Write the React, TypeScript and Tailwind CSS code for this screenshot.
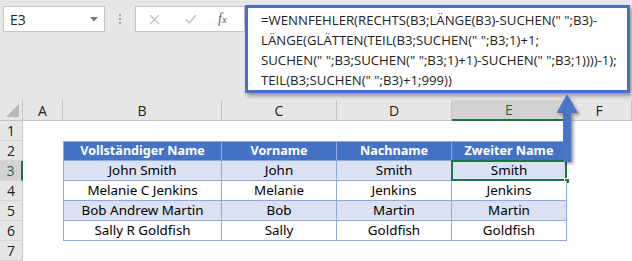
import React from 'react';

const COLS = ['A', 'B', 'C', 'D', 'E', 'F'];

const FORMULA = [
  '=WENNFEHLER(RECHTS(B3;LÄNGE(B3)-SUCHEN(" ";B3)-',
  'LÄNGE(GLÄTTEN(TEIL(B3;SUCHEN(" ";B3;1)+1;',
  'SUCHEN(" ";B3;SUCHEN(" ";B3;1)+1)-SUCHEN(" ";B3;1))))-1);',
  'TEIL(B3;SUCHEN(" ";B3)+1;999))',
];

const TABLE = [
  ['Vollständiger Name', 'Vorname', 'Nachname', 'Zweiter Name'],
  ['John Smith', 'John', 'Smith', 'Smith'],
  ['Melanie C Jenkins', 'Melanie', 'Jenkins', 'Jenkins'],
  ['Bob Andrew Martin', 'Bob', 'Martin', 'Martin'],
  ['Sally R Goldfish', 'Sally', 'Goldfish', 'Goldfish'],
];

function TopBar() {
  return (
    <div className="h-[100px] bg-[#e6e6e6] flex items-start pt-[6px] pl-[3px] shrink-0">
      {/* Name box */}
      <div className="w-[102px] h-[26px] bg-white border border-[#c6c6c6] flex items-center justify-between pl-[6px] pr-[6px]">
        <span className="text-[14px] text-[#222] font-['Open_Sans',sans-serif]">E3</span>
        <svg width="8" height="5" viewBox="0 0 8 5">
          <path d="M0 0 L8 0 L4 4.5 Z" fill="#7a7a7a" />
        </svg>
      </div>
      {/* separator dots */}
      <div className="w-[30px] h-[26px] flex flex-col items-center justify-center gap-[2px]">
        <span className="w-[2px] h-[2px] bg-[#a6a6a6]" />
        <span className="w-[2px] h-[2px] bg-[#a6a6a6]" />
        <span className="w-[2px] h-[2px] bg-[#a6a6a6]" />
      </div>
      {/* cancel / enter / fx */}
      <div className="w-[110px] h-[26px] bg-white border border-[#c6c6c6] flex items-center pl-[13px]">
        <svg width="11" height="11" viewBox="0 0 11 11">
          <path d="M1 1 L10 10 M10 1 L1 10" stroke="#c3c3c3" strokeWidth="1.3" fill="none" />
        </svg>
        <svg width="12" height="10" viewBox="0 0 12 10" className="ml-[25px]">
          <path d="M1 5.5 L4.5 9 L11 1" stroke="#c3c3c3" strokeWidth="1.6" fill="none" />
        </svg>
        <span className="ml-[21px] text-[14px] italic text-[#5f5f5f] font-['Liberation_Serif',serif] leading-none">
          f<span className="text-[11px]">x</span>
        </span>
      </div>
    </div>
  );
}

function FormulaBox() {
  return (
    <div className="absolute left-[245px] top-[5px] w-[385px] h-[88px] bg-white border-[3px] border-[#4472c4] shadow-[2px_3px_4px_rgba(0,0,0,0.35)] pl-[13px] pt-[2px]">
      {FORMULA.map((l) => (
        <div key={l} className="h-[20px] leading-[20px] text-[13.2px] text-[#222] whitespace-pre font-['Open_Sans',sans-serif]">
          {l}
        </div>
      ))}
    </div>
  );
}

function Arrow() {
  return (
    <svg className="absolute left-[553px] top-[92px]" width="30" height="74" viewBox="0 0 30 74">
      <defs>
        <filter id="sh" x="-50%" y="-20%" width="200%" height="140%">
          <feDropShadow dx="2" dy="2" stdDeviation="1.5" floodColor="#000" floodOpacity="0.35" />
        </filter>
      </defs>
      <path d="M14 2 L25 21 L18.5 21 L18.5 70 L10 70 L10 21 L3.5 21 Z" fill="#4a75c7" filter="url(#sh)" />
    </svg>
  );
}

export default function App() {
  const header = 'bg-[#e6e6e6] border-r border-b border-[#c4c4c4] flex items-center justify-center text-[14px] text-[#222] font-[\'Open_Sans\',sans-serif]';
  return (
    <div className="relative w-[632px] h-[261px] overflow-hidden bg-white flex flex-col">
      <TopBar />
      <div className="grid grid-cols-[23px_40px_159px_115px_115px_115px_65px] grid-rows-[21px_repeat(7,20px)]">
        {/* column header row */}
        <div className={header + ' relative'}>
          <svg className="absolute right-[3px] bottom-[3px]" width="13" height="13" viewBox="0 0 13 13">
            <path d="M13 0 L13 13 L0 13 Z" fill="#b9b9b9" />
          </svg>
        </div>
        {COLS.map((c) =>
          c === 'E' ? (
            <div key={c} className="bg-[#d2d2d2] border-r border-[#c4c4c4] border-b-2 border-b-[#217346] flex items-center justify-center text-[14px] text-[#1e6b41] font-['Open_Sans',sans-serif]">
              {c}
            </div>
          ) : (
            <div key={c} className={header}>{c}</div>
          )
        )}

        {[1, 2, 3, 4, 5, 6, 7].map((r) => {
          const rowHead =
            r === 3 ? (
              <div key={'h' + r} className="bg-[#d2d2d2] border-r-2 border-r-[#217346] border-b border-b-[#d4d4d4] flex items-center justify-center text-[14px] text-[#1e6b41] font-['Open_Sans',sans-serif]">
                {r}
              </div>
            ) : (
              <div key={'h' + r} className="bg-[#e6e6e6] border-r border-[#c4c4c4] border-b border-b-[#d4d4d4] flex items-center justify-center text-[14px] text-[#222] font-['Open_Sans',sans-serif]">
                {r}
              </div>
            );
          const data = r >= 2 && r <= 6 ? TABLE[r - 2] : null;
          return (
            <React.Fragment key={r}>
              {rowHead}
              <div />
              {[0, 1, 2, 3].map((ci) => {
                if (!data) return <div key={ci} />;
                const isHead = r === 2;
                const bg = isHead
                  ? 'bg-[#4472c4] text-white font-bold text-[12.6px]'
                  : r % 2 === 1
                  ? 'bg-[#d9e1f2] text-black text-[13.4px]'
                  : 'bg-white text-black text-[13.4px]';
                return (
                  <div
                    key={ci}
                    className={
                      'relative flex items-center justify-center leading-none font-[\'Lato\',sans-serif] border-r border-b border-[#8ea9db] ' +
                      bg +
                      (ci === 0 ? ' border-l' : '') +
                      (isHead ? ' border-t' : '')
                    }
                  >
                    {data[ci]}
                    {r === 3 && ci === 3 && (
                      <>
                        <div className="absolute -left-[1px] -top-[1px] -right-[1px] -bottom-[1px] border-2 border-[#217346]" />
                        <div className="absolute -right-[4px] -bottom-[4px] w-[6px] h-[6px] bg-[#217346] border border-white" />
                      </>
                    )}
                  </div>
                );
              })}
              <div />
            </React.Fragment>
          );
        })}
      </div>
      <FormulaBox />
      <Arrow />
    </div>
  );
}
